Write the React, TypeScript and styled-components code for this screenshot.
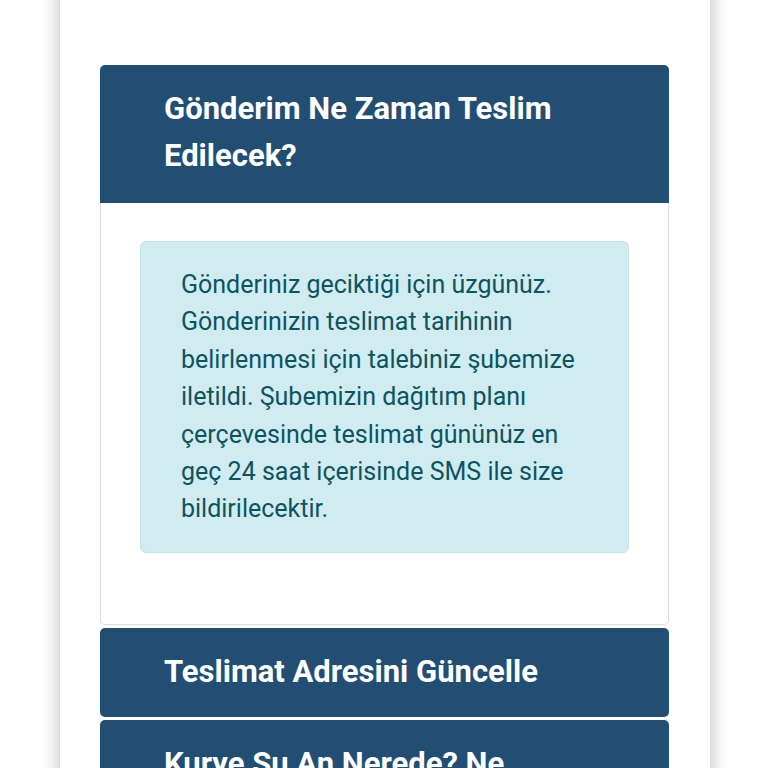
import React from 'react';
import styled, { createGlobalStyle } from 'styled-components';

const GlobalStyle = createGlobalStyle`
  html, body {
    margin: 0;
    padding: 0;
    background: #ffffff;
    font-family: Roboto, 'Liberation Sans', sans-serif;
    overflow: hidden;
  }
`;

const Page = styled.div`
  margin-top: -29px;
  padding: 0 58px 0 60px;
`;

const Card = styled.section`
  background: #ffffff;
  box-shadow: 0 0 18px rgba(0, 0, 0, 0.28);
  padding: 0 41px 40px 40px;
  min-height: 900px;
`;

const Title = styled.h2`
  margin: 0 0 60px;
  padding-left: 6px;
  font-size: 31px;
  line-height: 34px;
  font-weight: 700;
  color: #ececec;
`;

const Accordion = styled.div`
  display: flex;
  flex-direction: column;
  gap: 3px;
`;

const Item = styled.div`
  display: flex;
  flex-direction: column;
`;

const Header = styled.button<{ open?: boolean }>`
  display: block;
  width: 100%;
  text-align: left;
  border: none;
  background: #234e73;
  color: #ffffff;
  font-family: Roboto, 'Liberation Sans', sans-serif;
  font-size: 31px;
  font-weight: 700;
  line-height: 47px;
  padding: 20px 64px ${({ open }) => (open ? '24px' : '22px')};
  border-radius: ${({ open }) => (open ? '5px 5px 0 0' : '5px')};
  cursor: pointer;
`;

const Body = styled.div`
  border: 1px solid #dcdcdc;
  border-top: none;
  border-radius: 0 0 5px 5px;
  padding: 38px 39px 71px;
`;

const Alert = styled.div`
  background: #d1ecf1;
  border: 1px solid #bee5eb;
  border-radius: 6px;
  color: #0c5460;
  font-size: 25px;
  line-height: 37.4px;
  padding: 24px 40px;
`;

const faqs = [
  {
    q: 'Gönderim Ne Zaman Teslim Edilecek?',
    a: 'Gönderiniz geciktiği için üzgünüz. Gönderinizin teslimat tarihinin belirlenmesi için talebiniz şubemize iletildi. Şubemizin dağıtım planı çerçevesinde teslimat gününüz en geç 24 saat içerisinde SMS ile size bildirilecektir.',
    open: true,
  },
  { q: 'Teslimat Adresini Güncelle', a: '', open: false },
  { q: 'Kurye Şu An Nerede? Ne Zaman Gelecek?', a: '', open: false },
];

const App = () => (
  <>
    <GlobalStyle />
    <Page>
      <Card>
        <Title>Yardım Merkezi</Title>
        <Accordion>
          {faqs.map((f) => (
            <Item key={f.q}>
              <Header open={f.open}>{f.q}</Header>
              {f.open && (
                <Body>
                  <Alert>{f.a}</Alert>
                </Body>
              )}
            </Item>
          ))}
        </Accordion>
      </Card>
    </Page>
  </>
);

export default App;
